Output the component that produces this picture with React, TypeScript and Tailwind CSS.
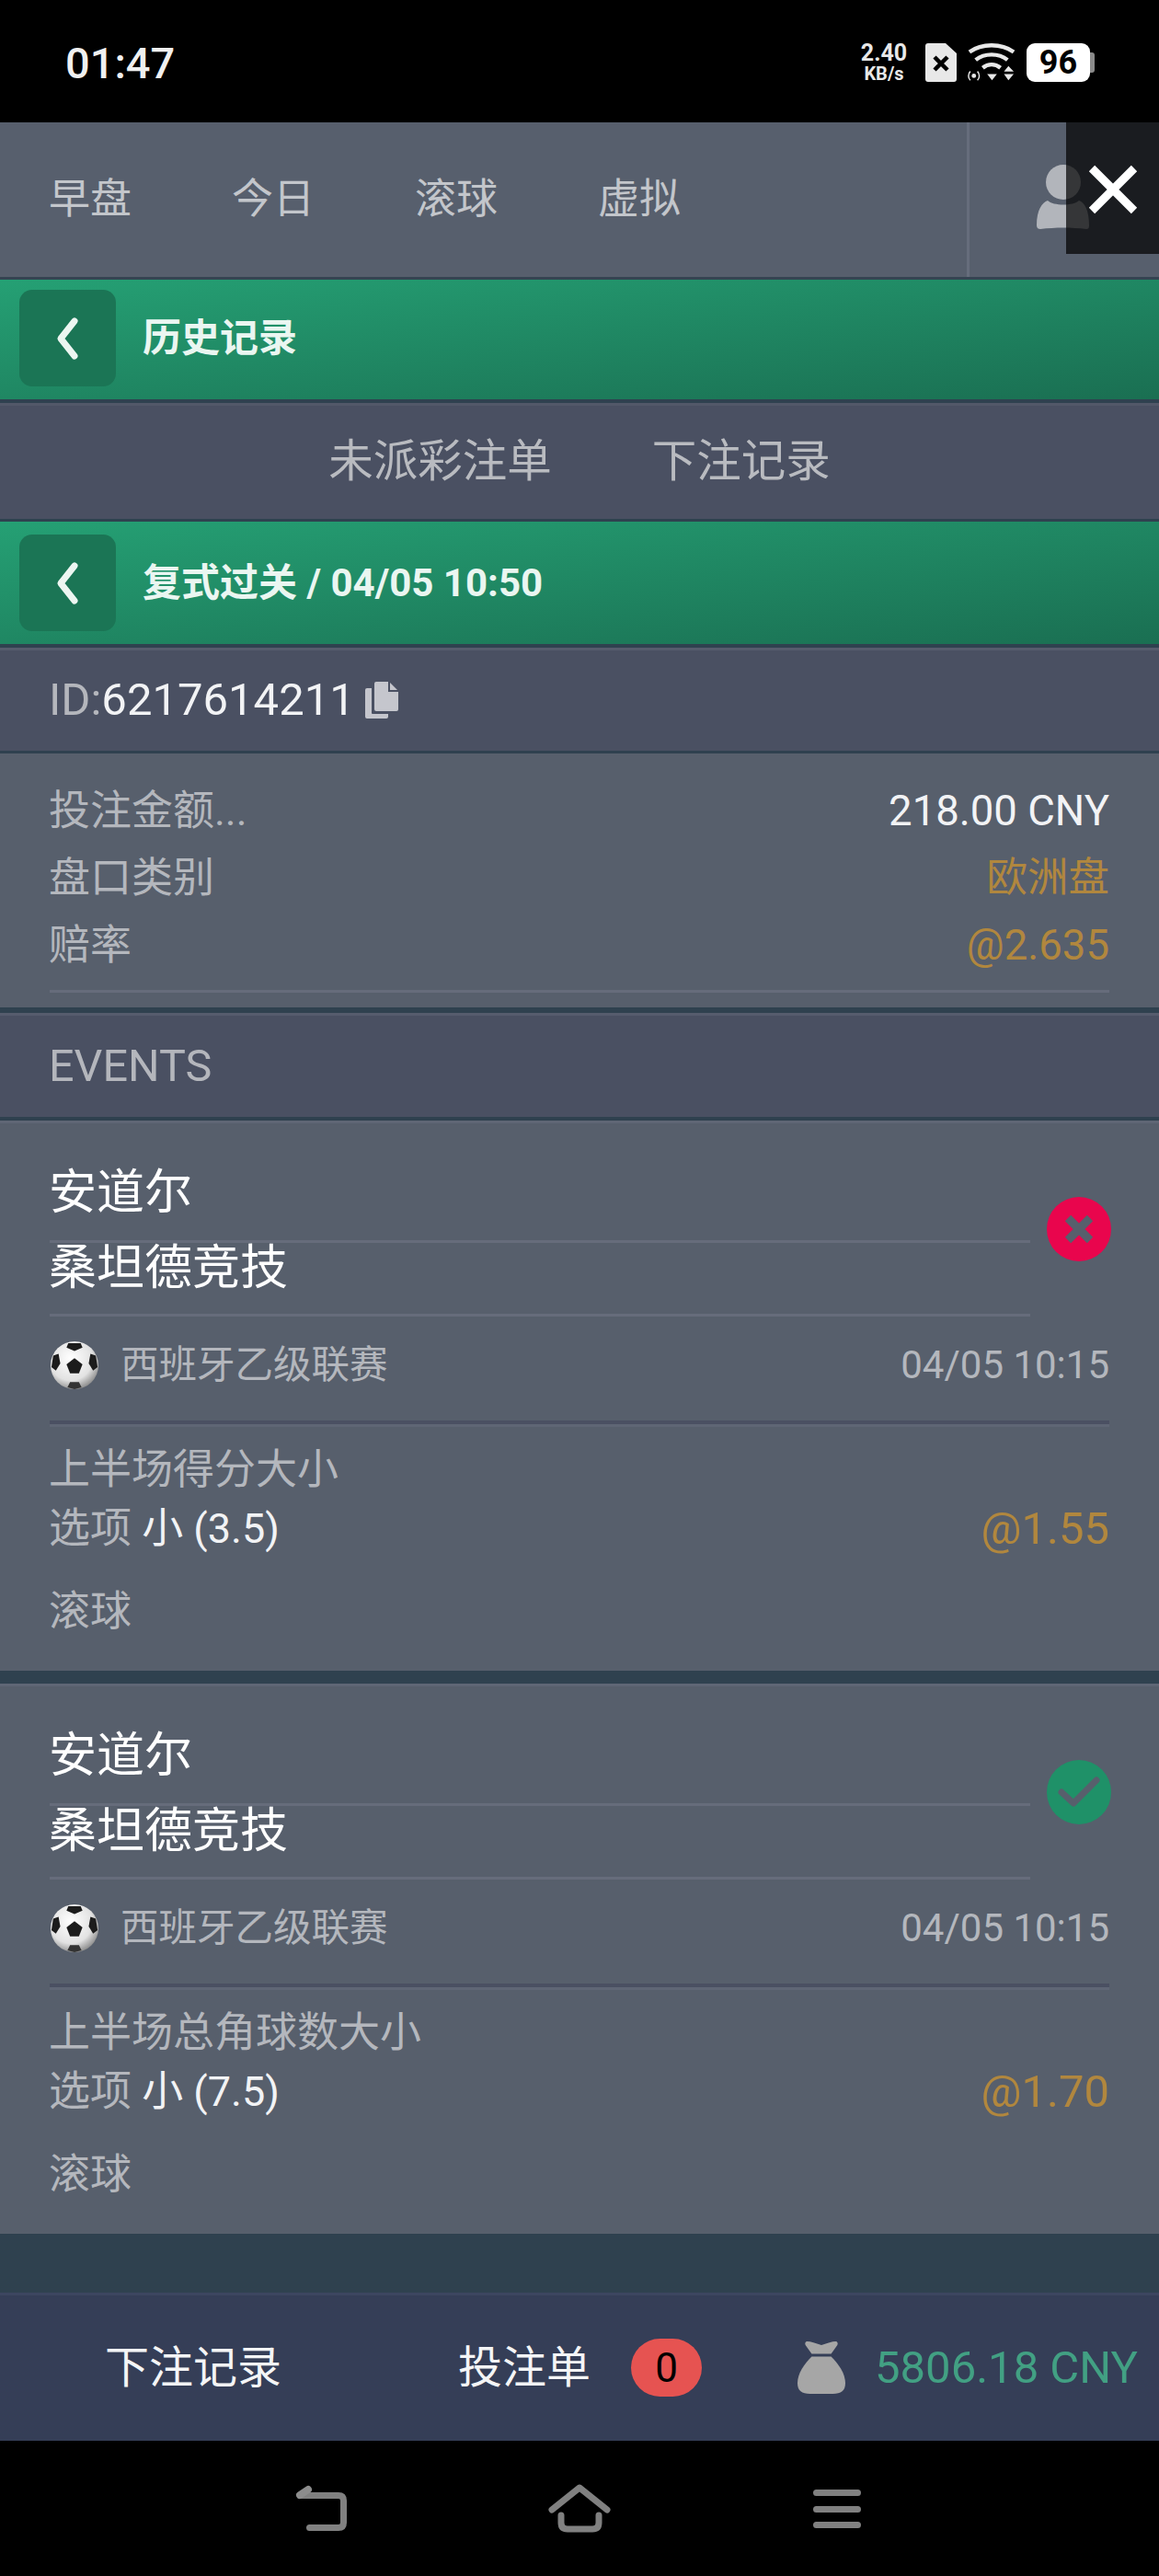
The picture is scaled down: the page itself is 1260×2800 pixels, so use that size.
import React from "react";

const FONT = "[font-family:Roboto,'Noto_Sans_CJK_SC',sans-serif]";

function Back({ lift }: { lift: boolean }) {
  return (
    <div className={`ml-[21px] flex h-[105px] w-[105px] items-center justify-center rounded-[14px] bg-[#1b7555] ${lift ? "mb-[3px]" : ""}`}>
      <svg width="40" height="50" viewBox="0 0 40 50">
        <path d="M27 6 L12 25 L27 44" fill="none" stroke="#ecf6f1" strokeWidth="7" strokeLinecap="round" strokeLinejoin="round" />
      </svg>
    </div>
  );
}

function GreenBar({ title, h, lift }: { title: string; h: string; lift: boolean }) {
  return (
    <div className={`flex items-center bg-gradient-to-br from-[#25a074] to-[#1a6f52] ${h}`}>
      <Back lift={lift} />
      <span className={`ml-[29px] text-[42px] font-bold leading-none text-[#eaf6f1] ${lift ? "mb-[3px]" : ""}`}>{title}</span>
    </div>
  );
}

function Ball() {
  return (
    <svg width="54" height="54" viewBox="0 0 56 56">
      <defs>
        <radialGradient id="ballg" cx="42%" cy="36%" r="70%">
          <stop offset="0%" stopColor="#ffffff" />
          <stop offset="65%" stopColor="#e2e2e2" />
          <stop offset="100%" stopColor="#7d7d7d" />
        </radialGradient>
      </defs>
      <circle cx="28" cy="28" r="27" fill="url(#ballg)" />
      <path d="M28 20 L37 27 L33 37 L23 37 L19 27 Z" fill="#1c1c1c" />
      <path d="M21 3 L35 3 L37 8 L28 12 L19 8 Z" fill="#1c1c1c" />
      <path d="M4 17 L10 15 L12 26 L7 34 L2 30 Z" fill="#1c1c1c" />
      <path d="M52 17 L46 15 L44 26 L49 34 L54 30 Z" fill="#1c1c1c" />
      <path d="M20 53 L23 47 L33 47 L36 53 L28 55 Z" fill="#333333" />
    </svg>
  );
}

function EventCard({ market, pick, odds, won }: { market: string; pick: string; odds: string; won: boolean }) {
  return (
    <section className="relative flex h-[598px] flex-col bg-[#575f6c] px-[54px]">
      <div className="-mx-[54px] h-[3px] bg-[#5f6675]" />
      <div className="mr-[86px] h-[130px] border-b-[3px] border-[#666c7b] pt-[50px]">
        <div className="-ml-px text-[52px] leading-[52px] text-white">安道尔</div>
      </div>
      <div className="mr-[86px] h-[80px] border-b-[3px] border-[#666c7b] pt-[2px]">
        <div className="-ml-px text-[52px] leading-[52px] text-white">桑坦德竞技</div>
      </div>
      <div className="flex h-[117px] items-center justify-between border-b-[4px] border-[#4a5062] pb-[8px]">
        <div className="flex items-center gap-[23px]">
          <Ball />
          <span className="text-[41.5px] leading-none text-[#b4b7bd]">西班牙乙级联赛</span>
        </div>
        <span className="text-[42px] leading-none text-[#b4b7bd]">04/05 10:15</span>
      </div>
      <div className="h-[3px] bg-[#5f6675]" />
      <div className="-ml-px mt-[21px] text-[45px] leading-[52px] text-[#b4b7bd]">{market}</div>
      <div className="mt-[11px] flex h-[52px] items-center justify-between">
        <span className="-ml-px text-[45px] leading-none text-[#b4b7bd]">
          选项 <span className="text-[#f2f3f5]">{pick}</span>
        </span>
        <span className="text-[49px] leading-none text-[#b1873e]">{odds}</span>
      </div>
      <div className="-ml-px mt-[39px] text-[45px] leading-[52px] text-[#b4b7bd]">滚球</div>

      <div className={`absolute right-[52px] top-[83px] flex h-[70px] w-[70px] items-center justify-center rounded-full ${won ? "bg-[#1f9168]" : "bg-[#e9054d]"}`}>
        {won ? (
          <svg width="50" height="40" viewBox="0 0 50 40">
            <path d="M6 20 L19 32 L44 7" fill="none" stroke="#575f6c" strokeWidth="7" strokeLinecap="round" strokeLinejoin="round" />
          </svg>
        ) : (
          <svg width="34" height="34" viewBox="0 0 34 34">
            <path d="M5 5 L29 29 M29 5 L5 29" fill="none" stroke="#575f6c" strokeWidth="9" />
          </svg>
        )}
      </div>
    </section>
  );
}

function StatusIcons() {
  return (
    <div className="flex items-center text-white">
      <div className="mr-[17px] flex w-[56px] flex-col items-center font-bold text-[#e8e8e8]">
        <span className="text-[25px] leading-[25px]">2.40</span>
        <span className="text-[20px] leading-[20px]">KB/s</span>
      </div>
      <svg width="34" height="42" viewBox="0 0 34 42" className="mr-[12px]">
        <path d="M3 0 H22 L34 11 V39 a3 3 0 0 1 -3 3 H3 a3 3 0 0 1 -3 -3 V3 a3 3 0 0 1 3 -3 Z" fill="#e8e8e8" />
        <path d="M10 15 L24 29 M24 15 L10 29" stroke="#000" strokeWidth="4.5" />
      </svg>
      <svg width="52" height="42" viewBox="0 0 54 42" className="mr-[12px]">
        <path d="M2 9 C16 -1 38 -1 52 9" fill="none" stroke="#e8e8e8" strokeWidth="4.5" />
        <path d="M9 18 C19 10 35 10 45 18" fill="none" stroke="#e8e8e8" strokeWidth="4.5" />
        <path d="M17 27 C23 22 31 22 37 27" fill="none" stroke="#e8e8e8" strokeWidth="4.5" />
        <path d="M22 34 H33 L27.5 41 Z" fill="#e8e8e8" />
        <path d="M41 31 L46 25 L52 31 Z M41 34 H52 L46 41 Z" fill="#e8e8e8" />
        <circle cx="7" cy="36" r="2.5" fill="#e8e8e8" />
        <path d="M3 31 a7 7 0 0 0 0 10 M11 31 a7 7 0 0 1 0 10" fill="none" stroke="#e8e8e8" strokeWidth="1.5" />
      </svg>
      <div className="flex h-[42px] w-[69px] items-center justify-center rounded-[9px] bg-white text-[36px] font-bold leading-none text-black">96</div>
      <div className="h-[22px] w-[5px] rounded-r-[3px] bg-[#8a8a8a]" />
    </div>
  );
}

export default function App() {
  return (
    <div className={`relative h-[2800px] w-[1260px] overflow-hidden bg-black ${FONT}`}>
      <header className="flex h-[133px] items-start justify-between pl-[71px] pr-[70px]">
        <span className="mt-[42px] text-[47px] font-medium leading-[54px] text-[#f0f0f0]">01:47</span>
        <div className="mt-[45px]">
          <StatusIcons />
        </div>
      </header>

      <nav className="flex h-[168px] bg-[#575f6d]">
        <div className="flex flex-1 items-center gap-[111px] pb-[2px] pl-[53px]">
          {["早盘", "今日", "滚球", "虚拟"].map((t) => (
            <span key={t} className="w-[88px] whitespace-nowrap text-[45px] leading-none text-[#c3c6cb]">
              {t}
            </span>
          ))}
        </div>
        <div className="flex w-[209px] items-start justify-end border-l-[3px] border-[#666d7c] pr-[75px] pt-[46px]">
          <svg width="58" height="71" viewBox="0 0 58 71">
            <circle cx="29" cy="19" r="19" fill="#b2b5bb" />
            <path d="M12 39 C18 45 40 45 46 39 C52 41 57 49 57 66 C57 69 56 70 54 70 C38 68 20 68 4 70 C2 70 0 69 0 66 C0 49 6 41 12 39 Z" fill="#b2b5bb" />
          </svg>
        </div>
      </nav>

      <div className="h-[3px] bg-[#354452]" />
      <GreenBar title="历史记录" h="h-[130px]" lift={true} />
      <div className="h-[4px] bg-[#2f414f]" />

      <div className="flex h-[126px] items-center justify-center gap-[109px] border-t-[3px] border-[#525869] bg-[#4a5062]">
        <span className="text-[48.5px] leading-none text-[#b9bbc0]">未派彩注单</span>
        <span className="text-[48.5px] leading-none text-[#b9bbc0]">下注记录</span>
      </div>

      <div className="h-[3px] bg-[#2f414f]" />
      <GreenBar title="复式过关 / 04/05 10:50" h="h-[133px]" lift={false} />
      <div className="h-[4px] bg-[#2f414f]" />

      <div className="flex h-[112px] items-center border-t-[3px] border-[#565c6d] bg-[#4a5062] pb-[3px] pl-[53px]">
        <span className="text-[49px] leading-none text-[#b4b6bc]">ID:</span>
        <span className="text-[49px] leading-none text-[#f2f3f5]">6217614211</span>
        <svg width="36" height="40" viewBox="0 0 36 40" className="ml-[11px] mt-[1px]">
          <path d="M12 0 H26 L36 10 V30 a2 2 0 0 1 -2 2 H12 a2 2 0 0 1 -2 -2 V2 a2 2 0 0 1 2 -2 Z" fill="#c5c6cd" />
          <path d="M2 7 H7 V34 a1 1 0 0 0 1 1 H25 V38 a2 2 0 0 1 -2 2 H2 a2 2 0 0 1 -2 -2 V9 a2 2 0 0 1 2 -2 Z" fill="#c5c6cd" />
          <path d="M26 0 V10 H36" fill="none" stroke="#4a5062" strokeWidth="2" />
        </svg>
      </div>

      <div className="h-[3px] bg-[#2f414f]" />
      <div className="flex h-[276px] flex-col bg-[#575f6c] px-[54px] pt-[26px]">
        <div className="flex h-[73px] items-center justify-between">
          <span className="-ml-px text-[45px] leading-none text-[#b4b7bd]">投注金额...</span>
          <span className="text-[45.5px] leading-none text-[#f2f3f5]">218.00 CNY</span>
        </div>
        <div className="flex h-[73px] items-center justify-between">
          <span className="-ml-px text-[45px] leading-none text-[#b4b7bd]">盘口类别</span>
          <span className="text-[44.5px] leading-none text-[#b1873e]">欧洲盘</span>
        </div>
        <div className="flex h-[73px] items-center justify-between">
          <span className="-ml-px text-[45px] leading-none text-[#b4b7bd]">赔率</span>
          <span className="text-[45.5px] leading-none text-[#b1873e]">@2.635</span>
        </div>
        <div className="mt-[12px] h-[3px] bg-[#666c7b]" />
      </div>

      <div className="h-[6px] bg-[#2f414f]" />
      <div className="flex h-[113px] items-center border-t-[3px] border-[#565c6d] bg-[#4a5062] pl-[53px]">
        <span className="text-[48.5px] leading-none text-[#b4b6bc]">EVENTS</span>
      </div>
      <div className="h-[4px] bg-[#2f414f]" />

      <EventCard market="上半场得分大小" pick="小 (3.5)" odds="@1.55" won={false} />
      <div className="h-[14px] bg-[#2f414f]" />
      <EventCard market="上半场总角球数大小" pick="小 (7.5)" odds="@1.70" won={true} />
      <div className="h-[64px] bg-[#2f414f]" />

      <footer className="flex h-[161px] items-center border-t-[3px] border-[#3d4660] bg-[#353e57] pb-[1px]">
        <span className="ml-[114px] text-[48px] leading-none text-[#f4f5f6]">下注记录</span>
        <span className="ml-[192px] text-[48px] leading-none text-[#f4f5f6]">投注单</span>
        <span className="ml-[44px] flex h-[63px] w-[77px] items-center justify-center rounded-full bg-[#e65351] text-[44px] leading-none text-black">0</span>
        <svg width="52" height="60" viewBox="0 0 54 60" className="ml-[104px]">
          <path d="M11 0 C15 0 20 2 27 4 C34 2 39 0 43 0 C45 0 46 2 45 4 L38 14 H16 L9 4 C8 2 9 0 11 0 Z" fill="#a6a6a6" />
          <path d="M16 17 H38 C46 25 54 36 54 47 C54 56 49 59 40 59 H14 C5 59 0 56 0 47 C0 36 8 25 16 17 Z" fill="#a6a6a6" />
        </svg>
        <span className="ml-[32px] whitespace-nowrap text-[49px] leading-none text-[#42a083]">5806.18 CNY</span>
      </footer>

      <div className="flex h-[147px] items-start justify-center bg-black pt-[47px]">
        <svg width="700" height="60" viewBox="0 0 700 60" fill="none" stroke="#808080" strokeWidth="7" strokeLinecap="round" strokeLinejoin="round">
          <path d="M46 12.5 H88 Q93.5 12.5 93.5 18 V42 Q93.5 47.5 88 47.5 H56.5" />
          <path d="M46 12 L55 6" strokeWidth="8" stroke="#8c8c8c" />
          <path d="M320 28 L350 4 L380 28" />
          <path d="M330 34 V42 Q330 49 337 49 H364 Q371 49 371 42 V34" />
          <path d="M607.5 9.5 H652.5 M607.5 27.5 H652.5 M607.5 44.5 H652.5" />
        </svg>
      </div>

      <div className="absolute right-0 top-[133px] flex h-[143px] w-[101px] items-start justify-center bg-black/70 pt-[46px]">
        <svg width="54" height="54" viewBox="0 0 54 54">
          <path d="M4 4 L50 50 M50 4 L4 50" stroke="#ffffff" strokeWidth="9" />
        </svg>
      </div>
    </div>
  );
}
